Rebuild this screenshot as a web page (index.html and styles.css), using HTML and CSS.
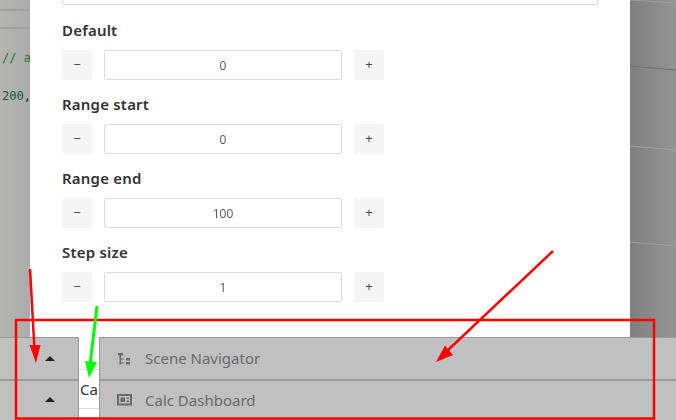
FILE: index.html
```html
<!DOCTYPE html>
<html lang="en">
<head>
<meta charset="utf-8">
<title>Number settings</title>
<link rel="stylesheet" href="styles.css">
</head>
<body>
<div class="page">
  <div class="main">
    <div class="backdrop-left">
      <div class="stripe stripe-a"></div>
      <div class="stripe stripe-b"></div>
      <div class="code code-comment">// a</div>
      <div class="code code-num">200<span class="code-comma">,</span></div>
    </div>
    <div class="modal">
      <div class="cut-input"></div>
      <div class="field">
        <div class="label">Default</div>
        <div class="stepper"><div class="step">−</div><div class="value">0</div><div class="step">+</div></div>
      </div>
      <div class="field">
        <div class="label">Range start</div>
        <div class="stepper"><div class="step">−</div><div class="value">0</div><div class="step">+</div></div>
      </div>
      <div class="field">
        <div class="label">Range end</div>
        <div class="stepper"><div class="step">−</div><div class="value">100</div><div class="step">+</div></div>
      </div>
      <div class="field">
        <div class="label">Step size</div>
        <div class="stepper"><div class="step">−</div><div class="value">1</div><div class="step">+</div></div>
      </div>
    </div>
    <div class="backdrop-right">
      <svg class="scene" width="46" height="337" viewBox="0 0 46 337">
        <path d="M0 0L46 3" stroke="#a0a0a0" fill="none"/>
        <path d="M0 66L46 70" stroke="#6e6e6e" fill="none"/>
        <path d="M0 146L46 150" stroke="#a4a4a4" fill="none"/>
        <path d="M0 242L46 246" stroke="#a0a0a0" fill="none"/>
      </svg>
    </div>
  </div>
  <div class="dock">
    <div class="dock-row">
      <div class="toggle"><span class="caret"></span></div>
      <div class="gap-cell"><div class="gap-line gap-line-first"></div></div>
      <div class="tab">
        <svg class="tab-icon" width="16" height="16" viewBox="0 0 16 16"><path d="M0 2h5v2.500H0zM1.500 4.500H3v9H1.500zM3 7.500h3v1H3zM3 11.500h3v1H3zM8 7h4v2.500H8zM8 11h4v2.500H8z" fill="#6a6a6a"/></svg>
        <span class="tab-text">Scene Navigator</span>
      </div>
    </div>
    <div class="dock-row dock-row-second">
      <div class="toggle"><span class="caret"></span></div>
      <div class="gap-cell"><div class="gap-line gap-line-second">Car</div></div>
      <div class="tab">
        <svg class="tab-icon" width="16" height="16" viewBox="0 0 16 16"><path fill-rule="evenodd" d="M-1 2h15v11.500H-1zM1 4v7.500h11V4z" fill="#6a6a6a"/><path d="M2.500 5.500h4.500v4.500H2.500zM8.500 5.500H11V7H8.500zM8.500 8.500H11V10H8.500z" fill="#6a6a6a"/></svg>
        <span class="tab-text">Calc Dashboard</span>
      </div>
    </div>
  </div>
  <svg class="marks" width="676" height="420" viewBox="0 0 676 420">
    <rect x="16" y="320" width="638" height="98.500" fill="none" stroke="#ff0000" stroke-width="2.500"/>
    <path d="M30 269L34.500 350" stroke="#ff0000" stroke-width="2.500" fill="none"/>
    <path d="M29.500 345L40.500 345L36 363z" fill="#ff0000"/>
    <path d="M553 251L447 351" stroke="#ff0000" stroke-width="2.500" fill="none"/>
    <path d="M445 345.500L453 355L436 362z" fill="#ff0000"/>
    <path d="M97 306L90 365" stroke="#00ff00" stroke-width="3" fill="none"/>
    <path d="M85 361L97 362L89 378z" fill="#00ff00"/>
  </svg>
</div>
</body>
</html>
```

FILE: styles.css
```css
html, body {
  margin: 0;
  padding: 0;
}

body {
  font-family: "Open Sans", "Noto Sans", sans-serif;
  background: #ffffff;
}

.page {
  position: relative;
  width: 676px;
  height: 420px;
  overflow: hidden;
  display: flex;
  flex-direction: column;
}

.main {
  display: flex;
  height: 337px;
}

.backdrop-left {
  position: relative;
  width: 30px;
  background: linear-gradient(90deg, #b4b4b2, #acacac);
}

.stripe {
  position: absolute;
  left: 0;
  right: 0;
  height: 2px;
  background: #a0a0a0;
}

.stripe-a {
  top: 9px;
}

.stripe-b {
  top: 27px;
}

.code {
  position: absolute;
  left: 2px;
  width: 28px;
  overflow: hidden;
  font-family: "DejaVu Sans Mono", "Liberation Mono", monospace;
  font-size: 12px;
  line-height: 16px;
  white-space: nowrap;
}

.code-comment {
  top: 50px;
  color: #1f7a1f;
}

.code-num {
  top: 88px;
  color: #0f5f3f;
}

.code-comma {
  color: #222222;
}

.modal {
  width: 600px;
  box-sizing: border-box;
  padding: 0 32px;
  background: #ffffff;
}

.cut-input {
  width: 536px;
  height: 5px;
  box-sizing: border-box;
  border: 1px solid #d9d9d9;
  border-top: 0;
  border-radius: 0 0 4px 4px;
}

.field {
  height: 74px;
}

.label {
  height: 45px;
  padding-top: 15px;
  box-sizing: border-box;
  font-family: "Noto Sans", sans-serif;
  font-size: 15px;
  line-height: 20px;
  font-weight: 600;
  letter-spacing: 0.2px;
  color: #333333;
}

.stepper {
  display: flex;
  gap: 12px;
}

.step {
  width: 30px;
  height: 30px;
  background: #f5f5f5;
  border-radius: 2px;
  text-align: center;
  font-size: 13px;
  line-height: 29px;
  color: #444444;
}

.value {
  width: 238px;
  height: 30px;
  box-sizing: border-box;
  border: 1px solid #d9d9d9;
  border-radius: 2px;
  text-align: center;
  font-size: 12px;
  line-height: 29px;
  color: #555555;
  will-change: transform;
}

.backdrop-right {
  width: 46px;
  background: linear-gradient(90deg, #7f7f7f, #959595);
}

.scene {
  display: block;
}

.dock {
  flex: 1;
  display: flex;
  flex-direction: column;
}

.dock-row {
  display: grid;
  grid-template-columns: 79px 20px 1fr;
  height: 42px;
}

.dock-row-second {
  height: 41px;
}

.toggle {
  display: flex;
  align-items: center;
  justify-content: flex-end;
  box-sizing: border-box;
  padding-right: 23px;
  background: #c0c0c0;
  border-top: 1px solid #9a9a9a;
  border-right: 1px solid #9a9a9a;
}

.dock-row-second .toggle,
.dock-row-second .tab {
  border-top: 2px solid #9a9a9a;
}

.dock-row-second .tab {
  padding-bottom: 1px;
}

.caret {
  width: 0;
  height: 0;
  border-left: 5px solid transparent;
  border-right: 5px solid transparent;
  border-bottom: 5px solid #222222;
}

.dock-row-second .caret {
  margin-bottom: 2px;
}

.gap-cell {
  background: #ffffff;
  overflow: hidden;
}

.gap-line {
  box-sizing: border-box;
  border-bottom: 1px solid #dddddd;
}

.gap-line-first {
  height: 33px;
}

.gap-line-second {
  height: 30px;
  padding-left: 1px;
  font-family: "Noto Sans", sans-serif;
  font-size: 15px;
  line-height: 21px;
  color: #333333;
  white-space: nowrap;
}

.tab {
  display: flex;
  align-items: center;
  gap: 11px;
  box-sizing: border-box;
  padding-left: 18px;
  background: #c0c0c0;
  border-top: 1px solid #9a9a9a;
  border-left: 1px solid #9a9a9a;
  font-family: "Noto Sans", sans-serif;
  font-size: 15px;
  color: #6a6a6a;
}

.tab-text {
  padding-bottom: 2px;
}

.dock-row-second .tab-text {
  padding-bottom: 0;
}

.tab-icon {
  flex: none;
  overflow: visible;
}

.marks {
  position: absolute;
  left: 0;
  top: 0;
  pointer-events: none;
}
```
